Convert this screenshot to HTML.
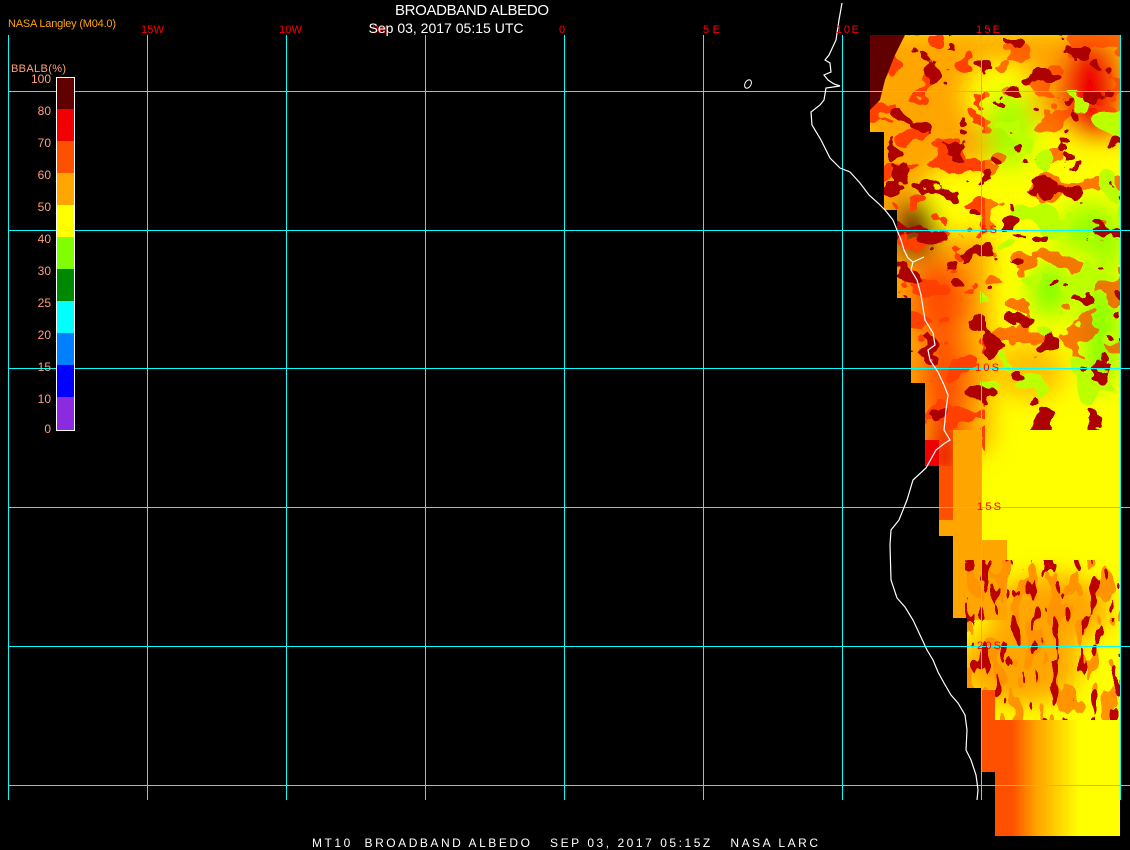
<!DOCTYPE html>
<html><head><meta charset="utf-8"><style>
html,body{margin:0;padding:0;background:#000;}
svg{display:block}
</style></head><body>
<svg width="1130" height="850" viewBox="0 0 1130 850" xmlns="http://www.w3.org/2000/svg">
<defs>
<clipPath id="dc">
<polygon points="870,35 1120,35 1120,836 995,836 995,772 981,772 981,688 967,688 967,618 953,618 953,536 939,536 939,466 925,466 925,383 911,383 911,298 897,298 897,210 884,210 884,132 870,132"/>
</clipPath>
<filter id="n1" x="0" y="0" width="100%" height="100%">
<feTurbulence type="fractalNoise" baseFrequency="0.035 0.045" numOctaves="3" seed="3"/>
<feColorMatrix type="matrix" values="0 0 0 0 0.42  0 0 0 0 0  0 0 0 0 0  4 0 0 0 -2.1"/>
<feComponentTransfer><feFuncA type="discrete" tableValues="0 1"/></feComponentTransfer>
</filter>
<filter id="n2" x="0" y="0" width="100%" height="100%">
<feTurbulence type="fractalNoise" baseFrequency="0.03 0.04" numOctaves="3" seed="8"/>
<feColorMatrix type="matrix" values="0 0 0 0 1  0 0 0 0 0.05  0 0 0 0 0  4 0 0 0 -1.9"/>
<feComponentTransfer><feFuncA type="discrete" tableValues="0 1"/></feComponentTransfer>
</filter>
<filter id="n3" x="0" y="0" width="100%" height="100%">
<feTurbulence type="fractalNoise" baseFrequency="0.03 0.03" numOctaves="2" seed="15"/>
<feColorMatrix type="matrix" values="0 0 0 0 0.5  0 0 0 0 1  0 0 0 0 0  4 0 0 0 -2.0"/>
<feComponentTransfer><feFuncA type="discrete" tableValues="0 1"/></feComponentTransfer>
</filter>
<filter id="n4" x="0" y="0" width="100%" height="100%">
<feTurbulence type="fractalNoise" baseFrequency="0.1 0.04" numOctaves="2" seed="21"/>
<feColorMatrix type="matrix" values="0 0 0 0 0.5  0 0 0 0 0  0 0 0 0 0  4 0 0 0 -2.0"/>
<feComponentTransfer><feFuncA type="discrete" tableValues="0 1"/></feComponentTransfer>
</filter>
<filter id="n5" x="0" y="0" width="100%" height="100%">
<feTurbulence type="fractalNoise" baseFrequency="0.08 0.035" numOctaves="2" seed="5"/>
<feColorMatrix type="matrix" values="0 0 0 0 1  0 0 0 0 0.3  0 0 0 0 0  4 0 0 0 -1.8"/>
<feComponentTransfer><feFuncA type="discrete" tableValues="0 1"/></feComponentTransfer>
</filter>
<filter id="bl" x="-50%" y="-50%" width="200%" height="200%"><feGaussianBlur stdDeviation="12"/></filter>
<linearGradient id="sg" x1="0" y1="0" x2="1" y2="0">
<stop offset="0" stop-color="#f00000"/>
<stop offset="0.08" stop-color="#ff5000"/>
<stop offset="0.22" stop-color="#ff5000"/>
<stop offset="0.4" stop-color="#ffa500"/>
<stop offset="0.7" stop-color="#ffff00"/>
</linearGradient>
</defs>
<rect width="1130" height="850" fill="#000"/>

<g clip-path="url(#dc)">
<rect x="860" y="30" width="270" height="820" fill="#ffff00"/>
<g filter="url(#bl)">
<rect x="860" y="30" width="130" height="420" fill="#ffa500"/>
<rect x="860" y="30" width="270" height="110" fill="#ffa500"/>
<ellipse cx="1000" cy="95" rx="35" ry="35" fill="#ffff00"/>
<ellipse cx="1040" cy="190" rx="60" ry="70" fill="#ffff00"/>
<ellipse cx="960" cy="200" rx="40" ry="35" fill="#ffff00"/>
<ellipse cx="1010" cy="130" rx="25" ry="40" fill="#80ff00" opacity="0.7"/>
<ellipse cx="1090" cy="240" rx="35" ry="40" fill="#80ff00" opacity="0.8"/>
<ellipse cx="1060" cy="300" rx="50" ry="50" fill="#ffff00"/>
<ellipse cx="1050" cy="290" rx="22" ry="30" fill="#80ff00"/>
<ellipse cx="1100" cy="330" rx="18" ry="60" fill="#80ff00"/>
<ellipse cx="1090" cy="90" rx="30" ry="50" fill="#f00000"/>
<ellipse cx="915" cy="230" rx="20" ry="30" fill="#600000"/>
<ellipse cx="940" cy="300" rx="30" ry="40" fill="#ff5000"/>
<ellipse cx="945" cy="380" rx="25" ry="50" fill="#ff5000"/>
<ellipse cx="945" cy="450" rx="20" ry="35" fill="#f00000"/>
<ellipse cx="1030" cy="370" rx="35" ry="30" fill="#ffa500" opacity="0.7"/>
</g>
<rect x="860" y="30" width="125" height="440" filter="url(#n2)"/>
<rect x="980" y="30" width="150" height="330" filter="url(#n2)" opacity="0.7"/>
<rect x="980" y="90" width="140" height="320" filter="url(#n3)"/>
<rect x="860" y="30" width="270" height="400" filter="url(#n1)"/>
<polygon points="870,35 905,35 895,55 885,80 880,100 870,110" fill="#600000"/>
<!-- west strip -->
<rect x="939" y="466" width="14" height="70" fill="#ff5000"/>
<rect x="925" y="440" width="14" height="26" fill="#f00000"/>
<rect x="953" y="430" width="28" height="120" fill="#ffa500"/>
<rect x="939" y="520" width="28" height="100" fill="#ffa500"/>
<rect x="967" y="540" width="40" height="80" fill="#ffa500"/>
<!-- southern streak band -->
<g filter="url(#bl)">
<ellipse cx="1050" cy="610" rx="60" ry="35" fill="#ffa500"/>
<ellipse cx="1020" cy="665" rx="60" ry="40" fill="#ffa500"/>
</g>
<rect x="965" y="560" width="160" height="160" filter="url(#n5)"/>
<rect x="965" y="560" width="160" height="160" filter="url(#n4)"/>
<!-- south strips -->
<rect x="981" y="720" width="140" height="120" fill="url(#sg)"/>
<rect x="981" y="690" width="14" height="82" fill="#ff5000"/>
</g>

<!-- grid -->
<g stroke="#00ffff" stroke-width="1">
<line x1="8.5" y1="35" x2="8.5" y2="800"/>
<line x1="147.5" y1="35" x2="147.5" y2="800"/>
<line x1="286.5" y1="35" x2="286.5" y2="800"/>
<line x1="425.5" y1="35" x2="425.5" y2="800"/>
<line x1="564.5" y1="35" x2="564.5" y2="800"/>
<line x1="703.5" y1="35" x2="703.5" y2="800"/>
<line x1="842.5" y1="35" x2="842.5" y2="800"/>
<line x1="981.5" y1="35" x2="981.5" y2="800"/>
<line x1="1120.5" y1="35" x2="1120.5" y2="800"/>
<line x1="8" y1="91.5" x2="1130" y2="91.5"/>
<line x1="8" y1="230.5" x2="1130" y2="230.5"/>
<line x1="8" y1="368.5" x2="1130" y2="368.5"/>
<line x1="8" y1="507.5" x2="1130" y2="507.5"/>
<line x1="8" y1="646.5" x2="1130" y2="646.5"/>
<line x1="8" y1="785.5" x2="1130" y2="785.5"/>
</g>

<!-- coastline -->
<polyline fill="none" stroke="#fff" stroke-width="1.2" points="842,3 839,20 836,40 829,55 825,60 830,63 831,72 824,75 828,80 834,84 840,86 826,88 824,100 820,105 811,112 812,125 821,140 830,158 840,168 850,172 860,183 869,195 878,203 885,210 893,220 897,230 901,240 904,250 908,258 913,262 924,257 913,262 911,270 917,280 921,295 925,320 933,333 935,345 928,350 930,360 938,372 944,385 948,395 946,410 944,430 950,440 945,443 936,450 926,468 913,480 907,500 899,520 891,530 890,545 891,580 897,598 905,607 913,620 920,635 927,650 933,660 938,672 944,683 951,695 958,703 965,715 967,730 966,750 971,760 976,775 978,790 977,800"/>
<ellipse cx="748" cy="84" rx="3" ry="4.5" transform="rotate(30 748 84)" fill="none" stroke="#fff" stroke-width="1"/>

<!-- labels -->
<g font-family="Liberation Sans, sans-serif" font-size="11" fill="#ff0000">
<text x="141" y="33" textLength="23">15W</text>
<text x="279" y="33" textLength="23">10W</text>
<text x="372" y="33" textLength="15">5W</text>
<text x="559" y="33">0</text>
<text x="703" y="33" textLength="17">5E</text>
<text x="836" y="33" textLength="23">10E</text>
<text x="976" y="33" textLength="24">15E</text>
<text x="981" y="233" textLength="16">5S</text>
<text x="975" y="371" textLength="24">10S</text>
<text x="977" y="510" textLength="24">15S</text>
<text x="977" y="649" textLength="24">20S</text>
</g>

<text x="472" y="15" text-anchor="middle" font-family="Liberation Sans, sans-serif" font-size="15" fill="#fff" textLength="154">BROADBAND ALBEDO</text>
<text x="446" y="33" text-anchor="middle" font-family="Liberation Sans, sans-serif" font-size="14" fill="#fff" textLength="155">Sep 03, 2017 05:15 UTC</text>
<text x="8" y="27" font-family="Liberation Sans, sans-serif" font-size="11" fill="#ffa500" textLength="108">NASA Langley (M04.0)</text>
<text x="11" y="72" font-family="Liberation Sans, sans-serif" font-size="11" fill="#ffa07a" textLength="55">BBALB(%)</text>

<!-- legend -->
<g>
<rect x="57" y="77" width="18" height="32" fill="#600000"/>
<rect x="57" y="109" width="18" height="32" fill="#f00000"/>
<rect x="57" y="141" width="18" height="32" fill="#ff5000"/>
<rect x="57" y="173" width="18" height="32" fill="#ffa500"/>
<rect x="57" y="205" width="18" height="32" fill="#ffff00"/>
<rect x="57" y="237" width="18" height="32" fill="#80ff00"/>
<rect x="57" y="269" width="18" height="32" fill="#008800"/>
<rect x="57" y="301" width="18" height="32" fill="#00ffff"/>
<rect x="57" y="333" width="18" height="32" fill="#0080ff"/>
<rect x="57" y="365" width="18" height="32" fill="#0000ff"/>
<rect x="57" y="397" width="18" height="33" fill="#8a2be2"/>
<rect x="56.5" y="77.5" width="18" height="353" fill="none" stroke="#fff" stroke-width="1"/>
</g>
<g font-family="Liberation Sans, sans-serif" font-size="12" fill="#ffa07a" text-anchor="end">
<text x="51" y="83">100</text>
<text x="51" y="115">80</text>
<text x="51" y="147">70</text>
<text x="51" y="179">60</text>
<text x="51" y="211">50</text>
<text x="51" y="243">40</text>
<text x="51" y="275">30</text>
<text x="51" y="307">25</text>
<text x="51" y="339">20</text>
<text x="51" y="371">15</text>
<text x="51" y="403">10</text>
<text x="51" y="433">0</text>
</g>

<!-- bottom caption -->
<text x="312" y="847" font-family="Liberation Sans, sans-serif" font-size="12" fill="#fff" textLength="506" xml:space="preserve">MT10  BROADBAND ALBEDO   SEP 03, 2017 05:15Z   NASA LARC</text>
</svg>
</body></html>
